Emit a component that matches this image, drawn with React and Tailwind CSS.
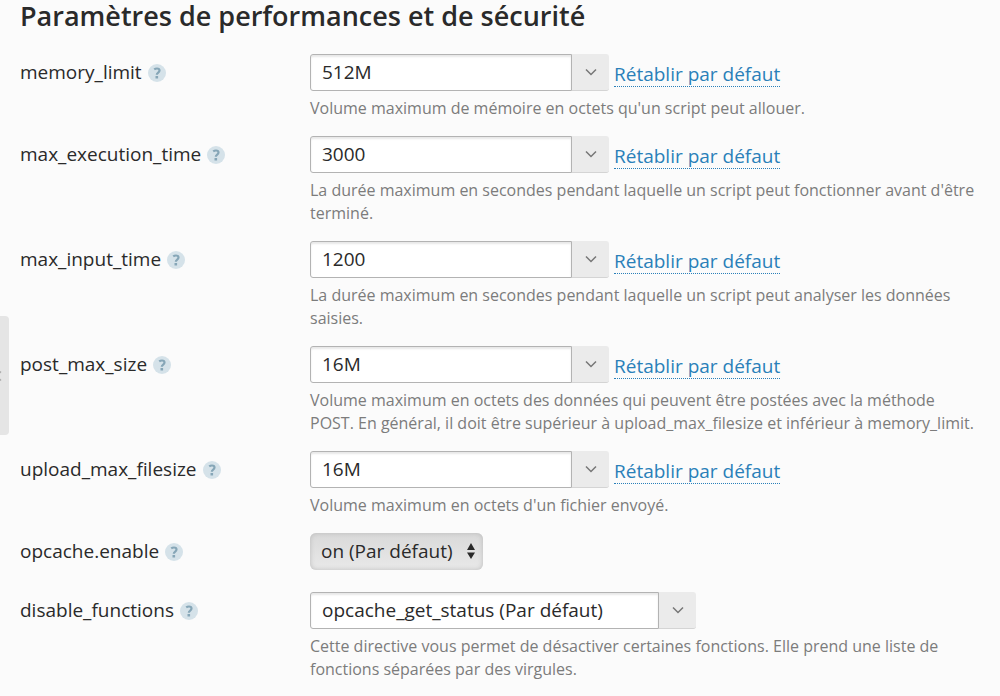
/**
 * PHP settings form: performance and security section
 */

const SETTINGS = [
  {
    name: 'memory_limit',
    value: '512M',
    hint: "Volume maximum de mémoire en octets qu'un script peut allouer.",
  },
  {
    name: 'max_execution_time',
    value: '3000',
    hint: "La durée maximum en secondes pendant laquelle un script peut fonctionner avant d'être terminé.",
  },
  {
    name: 'max_input_time',
    value: '1200',
    hint: 'La durée maximum en secondes pendant laquelle un script peut analyser les données saisies.',
  },
  {
    name: 'post_max_size',
    value: '16M',
    hint: 'Volume maximum en octets des données qui peuvent être postées avec la méthode POST. En général, il doit être supérieur à upload_max_filesize et inférieur à memory_limit.',
  },
  {
    name: 'upload_max_filesize',
    value: '16M',
    hint: "Volume maximum en octets d'un fichier envoyé.",
  },
]

function HelpButton({ name }) {
  return (
    <button
      type="button"
      aria-label={`Aide : ${name}`}
      className="flex size-[18px] shrink-0 items-center justify-center rounded-full bg-[#d5e2e9] text-[#86a6b7]"
    >
      <svg viewBox="0 0 18 18" className="size-[18px]" fill="none" stroke="currentColor" strokeWidth="2.2">
        <path d="M6.2 5.4C7 4.8 7.9 4.5 9 4.5c1.6 0 2.5.8 2.5 2.1 0 2-2.7 1.9-2.7 4.1" />
        <path d="M8.8 12v2.5" strokeWidth="2.6" />
      </svg>
    </button>
  )
}

// Label column on the left, control and hint on the right
function Row({ name, hint, children }) {
  return (
    <div className="flex items-start">
      <div className="flex h-[37px] w-[290px] shrink-0 items-center gap-1.5">
        <label htmlFor={name}>{name}</label>
        <HelpButton name={name} />
      </div>
      <div className="min-w-0 flex-1">
        {children}
        {hint && <p className="mt-1.5 text-base leading-[23px] text-[#7c7c7c]">{hint}</p>}
      </div>
    </div>
  )
}

function Combo({ name, value, wide = false }) {
  return (
    <div className="flex h-[37px]">
      <input
        id={name}
        type="text"
        defaultValue={value}
        className={`rounded-l-[3px] border border-[#b3b3b3] bg-white px-[11px] shadow-[inset_0_2px_2px_#e8e8e8] outline-none ${
          wide ? 'w-[349px]' : 'w-[262px]'
        }`}
      />
      <button
        type="button"
        aria-label={`Valeurs de ${name}`}
        className="flex w-[37px] items-center justify-center rounded-r-[3px] border-b border-[#d4d4d4] bg-[#ebebeb] text-[#777777]"
      >
        <svg viewBox="0 0 12 8" className="h-2 w-3" fill="none" stroke="currentColor" strokeWidth="1.5">
          <path d="M1 1.5l5 5 5-5" />
        </svg>
      </button>
    </div>
  )
}

export default function App() {
  return (
    <main className="relative min-h-screen bg-[#fbfbfb] px-5 pb-4 font-['Open_Sans',sans-serif] text-[19px] text-[#2a2a2a]">
      {/* Sidebar handle */}
      <button
        type="button"
        aria-label="Afficher le menu"
        className="absolute top-[316px] left-0 h-[119px] w-[9px] overflow-hidden rounded-r-[4px] bg-[#e5e5e5] text-[#aaaaaa]"
      >
        <svg viewBox="0 0 10 14" className="h-[14px] w-[10px]" fill="none" stroke="currentColor" strokeWidth="1.5">
          <path d="M1 2.5l-5 4.5 5 4.5" />
        </svg>
      </button>

      <h1 className="mb-[22px] text-[27px] leading-8 font-semibold">Paramètres de performances et de sécurité</h1>

      <form className="flex flex-col gap-4">
        {SETTINGS.map((s) => (
          <Row key={s.name} name={s.name} hint={s.hint}>
            <div className="flex items-end gap-[5px]">
              <Combo name={s.name} value={s.value} />
              <a href="#" className="mb-1 border-b border-dotted border-[#2a80b9] leading-6 text-[#2a80b9]">
                Rétablir par défaut
              </a>
            </div>
          </Row>
        ))}

        <Row name="opcache.enable">
          <div className="relative mb-1.5 flex w-[173px]">
            <select
              id="opcache.enable"
              className="h-[37px] w-full appearance-none rounded-md bg-linear-to-b from-[#d9d9d9] to-[#e9e9e9] pl-[11px] shadow-[inset_0_0_5px_#bbbbbb] outline-none"
            >
              <option>on (Par défaut)</option>
              <option>off</option>
            </select>
            <svg viewBox="0 0 8 16" className="pointer-events-none absolute top-[10px] right-2 h-4 w-2" fill="currentColor">
              <path d="M4 0l4 7H0zM4 16l4-6.5H0z" />
            </svg>
          </div>
        </Row>

        <Row
          name="disable_functions"
          hint="Cette directive vous permet de désactiver certaines fonctions. Elle prend une liste de fonctions séparées par des virgules."
        >
          <Combo name="disable_functions" value="opcache_get_status (Par défaut)" wide />
        </Row>
      </form>
    </main>
  )
}
